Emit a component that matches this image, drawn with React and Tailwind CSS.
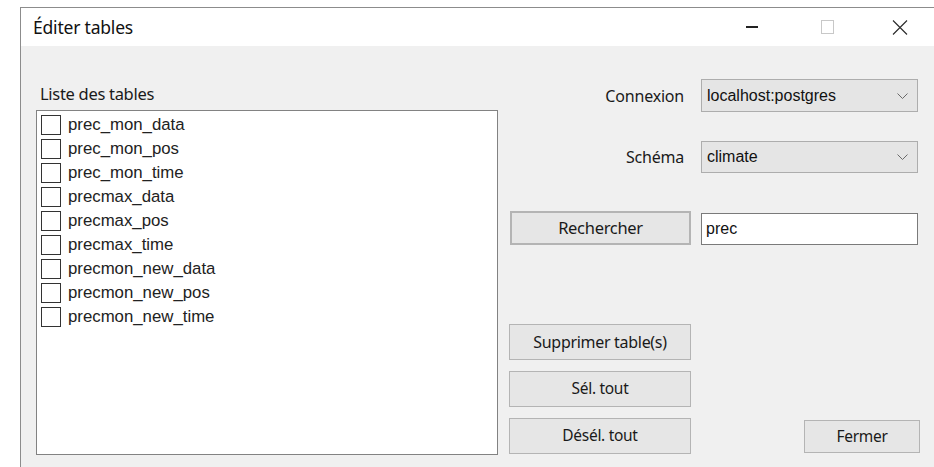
import React from "react";

const tables = [
  "prec_mon_data",
  "prec_mon_pos",
  "prec_mon_time",
  "precmax_data",
  "precmax_pos",
  "precmax_time",
  "precmon_new_data",
  "precmon_new_pos",
  "precmon_new_time",
];

const ui = { fontFamily: '"Noto Sans", "Open Sans", sans-serif' };
const classic = { fontFamily: '"Liberation Sans", Arial, sans-serif' };

function Chevron() {
  return (
    <svg width="11" height="6" viewBox="0 0 11 6" className="shrink-0">
      <path d="M0.5 0.5 L5.5 5.5 L10.5 0.5" fill="none" stroke="#6a6a6a" strokeWidth="1" />
    </svg>
  );
}

function Combo({ value, h }) {
  return (
    <div
      className={`w-[217px] ${h} ml-[17px] bg-[#e5e5e5] border border-[#adadad] flex items-center pl-[5px] pr-[9px] text-[16px] text-[#111]`}
      style={classic}
    >
      <span className="flex-1">{value}</span>
      <Chevron />
    </div>
  );
}

function Button({ children, className = "" }) {
  return (
    <div
      className={`bg-[#e6e6e6] border border-[#b4b4b4] flex items-center justify-center text-[15.5px] text-[#1a1a1a] tracking-[-0.3px] ${className}`}
      style={ui}
    >
      {children}
    </div>
  );
}

export default function App() {
  return (
    <div className="w-[934px] h-[467px] bg-white pl-[20px] pt-[7px] overflow-hidden">
      <div className="h-full border-l border-t border-[#8c8c8c] flex flex-col">
        {/* title bar */}
        <div className="h-[38px] bg-white flex items-center shrink-0">
          <span className="pl-[12px] text-[17.5px] text-[#111] tracking-[-0.2px]" style={ui}>
            Éditer tables
          </span>
          <div className="ml-auto flex items-center">
            <div className="w-[12px] h-[1.5px] bg-[#222] ml-0 mr-[63px]" />
            <div className="w-[13px] h-[14px] border border-[#c8c8c8] mr-[58px]" />
            <svg width="16" height="15" viewBox="0 0 16 15" className="mr-[26px]">
              <path d="M1 0.5 L15 14.5 M15 0.5 L1 14.5" stroke="#2a2a2a" strokeWidth="1.1" />
            </svg>
          </div>
        </div>

        {/* client area */}
        <div className="flex-1 bg-[#f0f0f0] flex">
          {/* table list */}
          <div className="pl-[15px] pt-[37px] flex flex-col">
            <div className="h-[22px] leading-[22px] pl-[4px] text-[16.5px] text-[#1a1a1a] tracking-[-0.3px]" style={ui}>
              Liste des tables
            </div>
            <div className="mt-[5px] w-[462px] h-[345px] bg-white border border-[#828282] pt-[4px] pl-[4px] flex flex-col">
              {tables.map((t) => (
                <div key={t} className="h-[24px] flex items-start">
                  <div className="w-[20px] h-[20px] border border-[#333] bg-white shrink-0" />
                  <span className="ml-[7px] leading-[20px] text-[16.8px] text-[#222]" style={classic}>
                    {t}
                  </span>
                </div>
              ))}
            </div>
          </div>

          {/* controls */}
          <div className="ml-[11px] pt-[33px] flex flex-col">
            <div className="flex items-center">
              <div className="w-[175px] text-right text-[16px] text-[#1a1a1a] tracking-[-0.2px]" style={ui}>
                Connexion
              </div>
              <Combo value="localhost:postgres" h="h-[33px]" />
            </div>
            <div className="flex items-center mt-[29px]">
              <div className="w-[175px] text-right text-[16px] text-[#1a1a1a] tracking-[-0.2px]" style={ui}>
                Schéma
              </div>
              <Combo value="climate" h="h-[32px]" />
            </div>
            <div className="flex items-end mt-[38px]">
              <Button className="ml-[1px] w-[181px] h-[34px] border-2 border-[#b0b0b0] text-[16.5px]">Rechercher</Button>
              <div
                className="ml-[10px] w-[217px] h-[32px] bg-white border border-[#7a7a7a] flex items-center pl-[4px] text-[16px] text-[#111]"
                style={classic}
              >
                prec
              </div>
            </div>
            <Button className="mt-[79px] w-[182px] h-[36px] text-[16px]">Supprimer table(s)</Button>
            <Button className="mt-[11px] w-[182px] h-[36px]">Sél. tout</Button>
            <div className="flex items-start mt-[11px]">
              <Button className="w-[182px] h-[36px]">Désél. tout</Button>
              <Button className="ml-[113px] mt-[2px] w-[116px] h-[33px] bg-[#e1e1e1] border-[#adadad]">Fermer</Button>
            </div>
          </div>
        </div>
      </div>
    </div>
  );
}
